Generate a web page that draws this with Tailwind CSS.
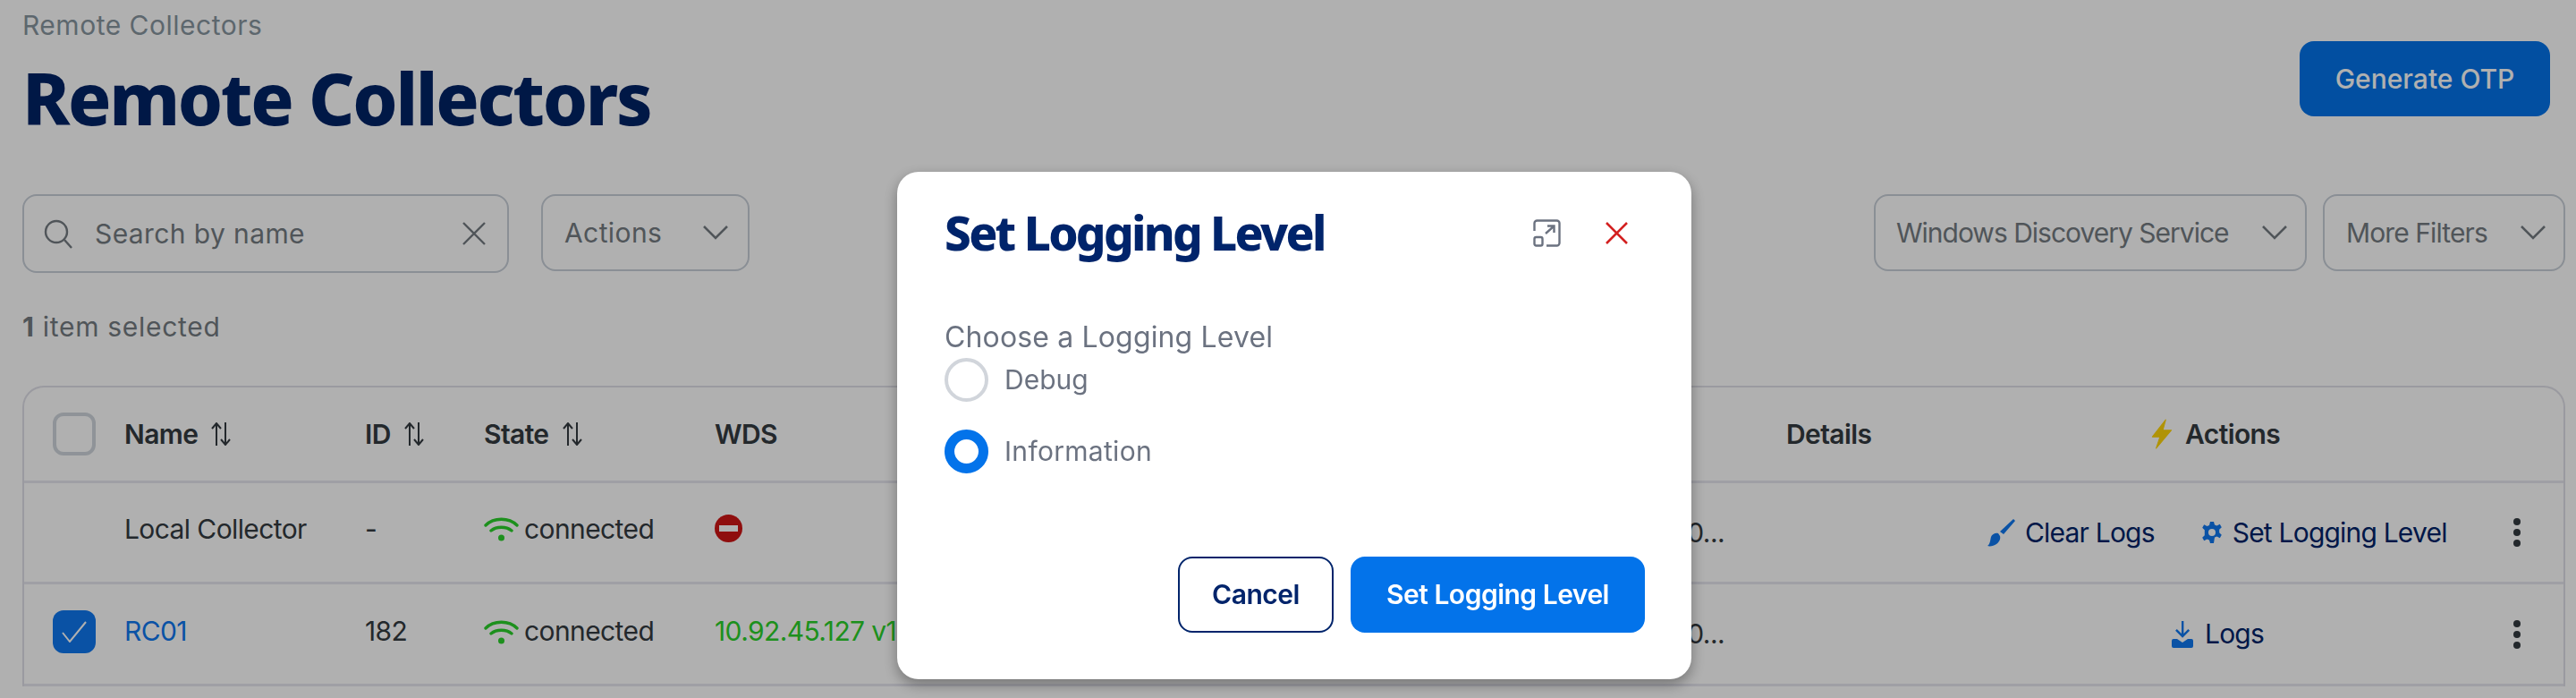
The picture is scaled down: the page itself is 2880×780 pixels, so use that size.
<!DOCTYPE html>
<html lang="en">
<head>
    <meta charset="UTF-8">
    <title>Remote Collectors</title>
    <script src="https://cdn.jsdelivr.net/npm/@tailwindcss/browser@4"></script>
</head>
<body class="bg-white font-['Inter',sans-serif] text-[#343a40] overflow-hidden h-[780px]">
<div class="h-[780px] overflow-hidden pl-[25px] pr-[12px]">
    <!-- page header -->
    <div class="flex justify-between h-[154px]">
        <div>
            <div class="pt-[10px] text-[30px] leading-[36px] tracking-[0.5px] text-[#87959f]">Remote Collectors</div>
            <h1 class="mt-[18px] text-[80px] leading-[90px] font-extrabold tracking-[-2.3px] text-[#002366] font-['Noto_Sans',sans-serif]">Remote Collectors</h1>
        </div>
        <button class="mt-[46px] mr-[17px] w-[280px] h-[84px] rounded-[16px] bg-[#0373ea] text-white text-[30px] font-medium">Generate OTP</button>
    </div>

    <!-- toolbar -->
    <div class="mt-[63px] flex items-start text-[30px] text-[#747b82]">
        <div class="w-[544px] h-[88px] border-2 border-[#c8cfd8] rounded-[16px] flex items-center pl-[22px] pr-[24px]">
            <svg class="w-[32px] h-[34px]" viewBox="0 0 32 34" fill="none" stroke="currentColor" stroke-width="2.4"><circle cx="14" cy="15" r="12"/><path d="M23 24l8 9"/></svg>
            <span class="ml-[25px] flex-1 tracking-[0.4px]">Search by name</span>
            <svg class="w-[26px] h-[26px]" viewBox="0 0 26 26" fill="none" stroke="currentColor" stroke-width="2.4"><path d="M1 1l24 24M25 1L1 25"/></svg>
        </div>
        <div class="ml-[36px] w-[233px] h-[86px] border-2 border-[#c8cfd8] rounded-[16px] flex items-center justify-between pl-[24px] pr-[22px]">
            <span class="tracking-[0.4px]">Actions</span>
            <svg class="w-[28px] h-[16px]" viewBox="0 0 28 16" fill="none" stroke="currentColor" stroke-width="2.6"><path d="M1 1l13 13L27 1"/></svg>
        </div>
        <div class="ml-auto w-[484px] h-[86px] border-2 border-[#c8cfd8] rounded-[16px] flex items-center justify-between pl-[23px] pr-[20px]">
            <span class="tracking-[-1px]">Windows Discovery Service</span>
            <svg class="w-[28px] h-[16px]" viewBox="0 0 28 16" fill="none" stroke="currentColor" stroke-width="2.6"><path d="M1 1l13 13L27 1"/></svg>
        </div>
        <div class="ml-[18px] w-[271px] h-[86px] border-2 border-[#c8cfd8] rounded-[16px] flex items-center justify-between pl-[24px] pr-[20px]">
            <span class="tracking-[-0.9px]">More Filters</span>
            <svg class="w-[28px] h-[16px]" viewBox="0 0 28 16" fill="none" stroke="currentColor" stroke-width="2.6"><path d="M1 1l13 13L27 1"/></svg>
        </div>
    </div>

    <div class="mt-[40px] text-[30px] leading-[40px] tracking-[0.7px] text-[#747b82]"><b class="font-bold">1</b> item selected</div>

    <!-- table -->
    <div class="mt-[46px] border-2 border-b-0 border-[#e0e0e8] rounded-t-[24px] text-[30px] tracking-[-0.6px]">
        <div class="grid grid-cols-[112px_269px_133px_258px_600px_598px_225px_588px_1fr] items-center h-[107px] border-b-[3px] border-[#e6e6ef] font-semibold">
            <div class="pl-[32px]"><div class="w-[48px] h-[48px] rounded-[12px] border-[4px] border-[#d0d6dc]"></div></div>
            <div class="flex items-center gap-[14px]">Name
                <svg class="w-[24px] h-[26px]" viewBox="0 0 24 26" fill="none" stroke="currentColor" stroke-width="2"><path d="M7 26V2M2 7l5-6 5 6M17 0v24M12 19l5 6 5-6"/></svg></div>
            <div class="flex items-center gap-[14px]">ID
                <svg class="w-[24px] h-[26px]" viewBox="0 0 24 26" fill="none" stroke="currentColor" stroke-width="2"><path d="M7 26V2M2 7l5-6 5 6M17 0v24M12 19l5 6 5-6"/></svg></div>
            <div class="flex items-center gap-[14px]">State
                <svg class="w-[24px] h-[26px]" viewBox="0 0 24 26" fill="none" stroke="currentColor" stroke-width="2"><path d="M7 26V2M2 7l5-6 5 6M17 0v24M12 19l5 6 5-6"/></svg></div>
            <div class="col-span-2">WDS</div>
            <div>Details</div>
            <div class="flex items-center gap-[13px] pl-[182px]">
                <svg class="w-[26px] h-[34px] text-[#ffd60a]" viewBox="0 0 24 32" fill="currentColor" stroke="currentColor" stroke-width="1" stroke-linejoin="round"><path d="M16 1L2 19h8L6 31l16-19h-9z"/></svg>
                Actions
            </div>
            <div></div>
        </div>

        <div class="grid grid-cols-[112px_269px_133px_258px_600px_598px_225px_588px_1fr] items-center h-[113px] border-b-[3px] border-[#e6e6ef]">
            <div></div>
            <div class="pb-[8px]">Local Collector</div>
            <div class="pb-[8px]">-</div>
            <div class="pb-[8px] flex items-center gap-[6px]">
                <svg class="w-[39px] h-[28px] text-[#2bd12b]" viewBox="0 0 39 28" fill="none" stroke="currentColor" stroke-width="3.4" stroke-linecap="round"><path d="M2 10C11 1 28 1 37 10M8 16c6-5 17-5 23 0"/><circle cx="19.500" cy="24" r="3.500" fill="currentColor" stroke="none"/></svg>
                connected
            </div>
            <div class="pb-[10px]">
                <svg class="w-[31px] h-[31px] text-[#d01515]" viewBox="0 0 31 31"><circle cx="15.500" cy="15.500" r="15.500" fill="currentColor"/><rect x="5" y="12" width="21" height="7" fill="white"/></svg>
            </div>
            <div class="text-right pr-[69px]">10.0...</div>
            <div></div>
            <div class="flex items-center text-[#002369] tracking-[-0.8px]">
                <svg class="w-[32px] h-[32px] text-[#0f77ef]" viewBox="0 0 32 32" fill="currentColor"><path d="M0 31c3-2 3-6 4-10 1-3 5-5 8-4l2 3c1 3-1 7-4 9-3 2-7 3-10 2z"/><path d="M14 15L29 1l2 2-13 15z"/></svg>
                <span class="ml-[10px]">Clear Logs</span>
                <svg class="ml-[52px] w-[24px] h-[26px] text-[#0f77ef]" viewBox="0 0 24 24" fill="currentColor"><path d="M10 0h4l1 3.500 2.500 1 3.300-1.700 2 3.400-2.600 2.500v3.600l2.600 2.500-2 3.400-3.300-1.700-2.500 1L14 24h-4l-1-3.500-2.500-1-3.300 1.700-2-3.400 2.600-2.500V9.200L1.200 6.700l2-3.400 3.300 1.700 2.500-1zM12 8a4 4 0 1 0 0 8 4 4 0 0 0 0-8z"/></svg>
                <span class="ml-[11px]">Set Logging Level</span>
            </div>
            <div class="flex flex-col gap-[4px]">
                <span class="w-[8px] h-[8px] rounded-full bg-[#343a40]"></span><span class="w-[8px] h-[8px] rounded-full bg-[#343a40]"></span><span class="w-[8px] h-[8px] rounded-full bg-[#343a40]"></span>
            </div>
        </div>

        <div class="grid grid-cols-[112px_269px_133px_258px_600px_598px_225px_588px_1fr] items-center h-[114px] border-b-[3px] border-[#e6e6ef]">
            <div class="pl-[32px] pb-[6px]">
                <div class="w-[48px] h-[48px] rounded-[12px] bg-[#0f77ef] flex items-center justify-center">
                    <svg class="w-[30px] h-[24px]" viewBox="0 0 30 24" fill="none" stroke="white" stroke-width="2"><path d="M2 13l8 10L28 1"/></svg>
                </div>
            </div>
            <div class="pb-[6px] text-[#0f77ef]">RC01</div>
            <div class="pb-[6px]">182</div>
            <div class="pb-[6px] flex items-center gap-[6px]">
                <svg class="w-[39px] h-[28px] text-[#2bd12b]" viewBox="0 0 39 28" fill="none" stroke="currentColor" stroke-width="3.4" stroke-linecap="round"><path d="M2 10C11 1 28 1 37 10M8 16c6-5 17-5 23 0"/><circle cx="19.500" cy="24" r="3.500" fill="currentColor" stroke="none"/></svg>
                connected
            </div>
            <div class="pb-[6px] text-[#2bd12b] whitespace-nowrap overflow-hidden">10.92.45.127 v19.1.0</div>
            <div class="text-right pr-[69px]">10.0...</div>
            <div></div>
            <div class="flex items-center text-[#002369] pl-[206px] tracking-[-0.8px]">
                <svg class="w-[24px] h-[30px] text-[#0f77ef]" viewBox="0 0 24 30" fill="currentColor"><path d="M11 0h2.400v14l5-5 1.700 1.700-8 8-8-8L5.800 9l5.200 5z"/><path d="M2 20h4l6 4 6-4h4q2 0 2 2v6q0 2-2 2H2q-2 0-2-2v-6q0-2 2-2z"/></svg>
                <span class="ml-[13px]">Logs</span>
            </div>
            <div class="flex flex-col gap-[4px]">
                <span class="w-[8px] h-[8px] rounded-full bg-[#343a40]"></span><span class="w-[8px] h-[8px] rounded-full bg-[#343a40]"></span><span class="w-[8px] h-[8px] rounded-full bg-[#343a40]"></span>
            </div>
        </div>
    </div>
</div>

<!-- dim layer -->
<div class="fixed inset-0 bg-black/[.31]"></div>

<!-- modal -->
<div class="fixed left-[1003px] top-[192px] w-[888px] h-[567px] bg-white rounded-[24px] shadow-[0_6px_16px_rgba(0,0,0,0.35)] pl-[53px] pr-[52px]">
    <div class="flex items-center h-[136px]">
        <h2 class="flex-1 text-[53px] leading-[64px] font-extrabold tracking-[-2.7px] text-[#00246b] font-['Noto_Sans',sans-serif]">Set Logging Level</h2>
        <svg class="w-[31px] h-[31px] text-[#6b7280]" viewBox="0 0 31 31" fill="none" stroke="currentColor" stroke-width="2.400"><path d="M1.500 13V4.500a3 3 0 0 1 3-3h22a3 3 0 0 1 3 3v22a3 3 0 0 1-3 3H15"/><rect x="1.500" y="20" width="9" height="9.500" rx="2"/><path d="M14 16l9-8M16 7.500h7.500V15"/></svg>
        <svg class="ml-[50px] mr-[19px] w-[25px] h-[25px] text-[#d32020]" viewBox="0 0 25 25" fill="none" stroke="currentColor" stroke-width="2.600"><path d="M1 1l23 23M24 1L1 24"/></svg>
    </div>
    <div class="text-[32px] leading-[40px] text-[#6b7280] mt-[29px] tracking-[0.15px]">Choose a Logging Level</div>
    <div class="flex items-center mt-[2px] h-[50px] text-[30px] text-[#6b7280]">
        <span class="w-[49px] h-[49px] rounded-full border-[4px] border-[#d1d5db]"></span>
        <span class="ml-[18px]">Debug</span>
    </div>
    <div class="flex items-center mt-[30px] h-[50px] text-[30px] text-[#6b7280]">
        <span class="w-[49px] h-[49px] rounded-full border-[11px] border-[#0373ea]"></span>
        <span class="ml-[18px] tracking-[0.3px]">Information</span>
    </div>
    <div class="flex justify-end gap-[19px] mt-[93px] text-[30px] font-semibold tracking-[-0.5px]">
        <button class="w-[174px] h-[85px] rounded-[16px] border-2 border-[#00246b] text-[#00246b]">Cancel</button>
        <button class="w-[329px] h-[85px] rounded-[16px] bg-[#0373ea] text-white">Set Logging Level</button>
    </div>
</div>
</body>
</html>
